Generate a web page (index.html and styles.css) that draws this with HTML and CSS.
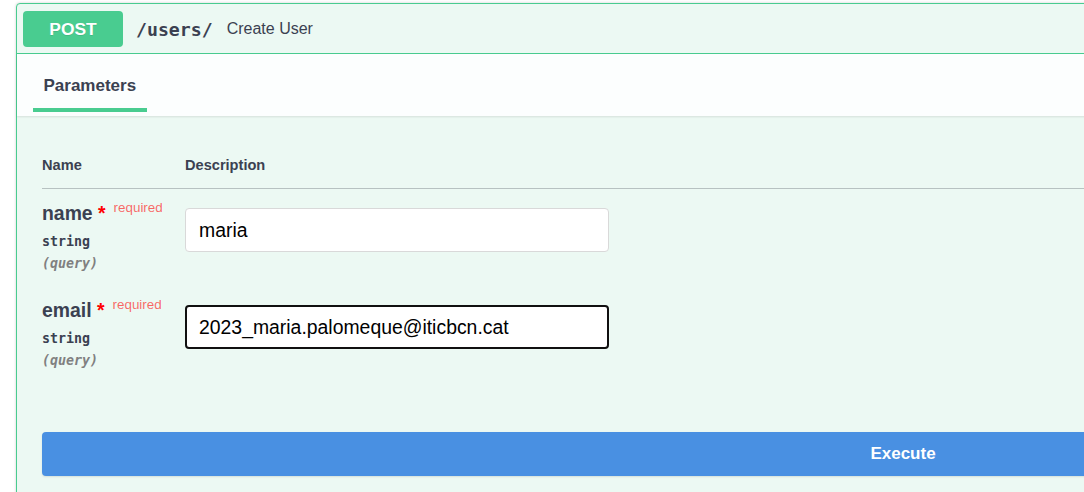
FILE: index.html
```html
<!DOCTYPE html>
<html lang="en">
<head>
<meta charset="utf-8">
<title>POST /users/</title>
<link rel="stylesheet" href="styles.css">
</head>
<body>
<div class="opblock">
  <div class="summary">
    <span class="method">POST</span>
    <span class="path">/users/</span>
    <span class="summary-desc">Create User</span>
  </div>
  <div class="tab-header">
    <div class="tab-item">Parameters</div>
  </div>
  <div class="section">
    <div class="table-head">
      <div class="col-name">Name</div>
      <div class="col-desc">Description</div>
    </div>
    <div class="param-row">
      <div class="col-name">
        <div class="param-name">name&nbsp;<span class="star">*</span><span class="required">required</span></div>
        <div class="param-type">string</div>
        <div class="param-in">(query)</div>
      </div>
      <div class="col-desc">
        <input class="field" type="text" value="maria">
      </div>
    </div>
    <div class="param-row">
      <div class="col-name">
        <div class="param-name">email&nbsp;<span class="star">*</span><span class="required">required</span></div>
        <div class="param-type">string</div>
        <div class="param-in">(query)</div>
      </div>
      <div class="col-desc">
        <input class="field field-focus" type="text" value="2023_maria.palomeque@iticbcn.cat">
      </div>
    </div>
    <div class="execute-wrap">
      <button class="execute" type="button">Execute</button>
    </div>
  </div>
</div>
</body>
</html>
```

FILE: styles.css
```css
html, body {
  margin: 0;
  padding: 0;
  background: #ffffff;
  overflow: hidden;
}

body {
  font-family: "Liberation Sans", Arial, sans-serif;
  color: #3b4151;
  padding: 3px 0 0 16px;
}

.opblock {
  width: 1774px;
  box-sizing: border-box;
  border: 1px solid #49cc90;
  border-radius: 4px;
  background: #ecf9f3;
  box-shadow: 0 0 3px rgba(0, 0, 0, 0.19);
  min-height: 600px;
}

.summary {
  display: flex;
  align-items: center;
  padding: 7px 6px 6px 6px;
  border-bottom: 1px solid #49cc90;
}

.method {
  display: flex;
  align-items: center;
  justify-content: center;
  width: 100px;
  height: 36px;
  border-radius: 4px;
  background: #49cc90;
  color: #ffffff;
  font-weight: bold;
  font-size: 17.4px;
  text-shadow: 0 1px 0 rgba(0, 0, 0, 0.1);
}

.path {
  margin-left: 13px;
  font-family: "DejaVu Sans Mono", monospace;
  font-weight: bold;
  font-size: 18.2px;
  color: #3b4151;
}

.summary-desc {
  margin-left: 14px;
  font-size: 16px;
  color: #3b4151;
}

.tab-header {
  display: flex;
  padding: 22px 0 4px 16px;
  background: rgba(255, 255, 255, 0.85);
  box-shadow: 0 1px 2px rgba(0, 0, 0, 0.1);
}

.tab-item {
  padding: 0 10.5px 12px;
  line-height: 20px;
  font-size: 17px;
  font-weight: bold;
  color: #3b4151;
  border-bottom: 4px solid #49cc90;
}

.section {
  padding: 40px 25px 0;
}

.table-head {
  display: flex;
  padding-bottom: 14px;
  border-bottom: 1px solid rgba(59, 65, 81, 0.3);
  font-size: 14.6px;
  font-weight: bold;
  line-height: 18px;
}

.col-name {
  width: 143px;
  flex: none;
}

.col-desc {
  flex: 1;
}

.param-row {
  display: flex;
  padding: 12px 0 14px;
}

.param-name {
  font-size: 19.4px;
  font-weight: bold;
  line-height: 24px;
  white-space: nowrap;
}

.star {
  color: #ff0000;
}

.required {
  margin-left: 8px;
  font-size: 13.4px;
  font-weight: normal;
  line-height: 0;
  color: rgba(255, 0, 0, 0.6);
  vertical-align: 8px;
}

.param-type {
  margin-top: 8px;
  font-family: "DejaVu Sans Mono", monospace;
  font-weight: bold;
  font-size: 13.3px;
  line-height: 17px;
}

.param-in {
  margin-top: 5px;
  font-family: "DejaVu Sans Mono", monospace;
  font-weight: bold;
  font-style: italic;
  font-size: 13.3px;
  line-height: 17px;
  color: #808080;
}

.field {
  display: block;
  margin-top: 7px;
  width: 424px;
  height: 44px;
  box-sizing: border-box;
  padding: 0 13px;
  border: 1px solid #d9d9d9;
  border-radius: 4px;
  background: #ffffff;
  font-family: "Liberation Sans", Arial, sans-serif;
  font-size: 19.4px;
  color: #000000;
  outline: none;
}

.field-focus {
  border: 2px solid #101010;
  padding: 0 12px;
}

.execute-wrap {
  padding-top: 49px;
}

.execute {
  display: block;
  width: 100%;
  height: 44px;
  border: none;
  border-radius: 4px;
  background: #4990e2;
  color: #ffffff;
  font-family: "Liberation Sans", Arial, sans-serif;
  font-size: 17px;
  font-weight: bold;
  box-shadow: 0 1px 2px rgba(0, 0, 0, 0.1);
}
```
